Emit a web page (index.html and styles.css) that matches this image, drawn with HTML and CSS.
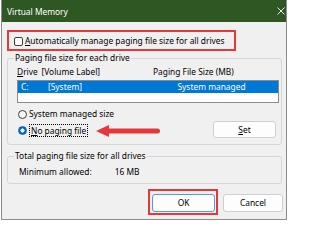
FILE: index.html
```html
<!DOCTYPE html>
<html>
<head>
<meta charset="utf-8">
<title>Virtual Memory</title>
<link rel="stylesheet" href="styles.css">
</head>
<body>
<div class="window">
  <div class="titlebar">
    <span class="title">Virtual Memory</span>
    <svg class="close" width="8" height="8" viewBox="0 0 8 8"><path d="M0.5 0.5L7.5 7.5M7.5 0.5L0.5 7.5" stroke="#e6ebe4" stroke-width="1"/></svg>
  </div>
  <div class="content">
    <div class="highlight auto">
      <span class="checkbox"></span>
      <span class="cblabel"><u>A</u>utomatically manage paging file size for all drives</span>
    </div>
    <fieldset class="group g1">
      <legend>Paging file size for each drive</legend>
      <div class="list-head"><span class="c1"><u>D</u>rive</span><span class="c2">[Volume Label]</span><span>Paging File Size (MB)</span></div>
      <div class="listbox">
        <div class="row selected"><span class="r1">C:</span><span class="r2">[System]</span><span>System managed</span></div>
      </div>
      <div class="radio-row r-sys"><span class="radio"></span><span class="rlabel">System managed size</span></div>
      <div class="radio-row r-none">
        <span class="radio on"></span>
        <span class="rlabel focus"><u>N</u>o paging file</span>
        <svg class="arrow" width="64" height="12" viewBox="0 0 64 12"><polygon points="0,6 13,0 13,12" fill="#e5383b"/><line x1="11" y1="6" x2="61.5" y2="6" stroke="#e5383b" stroke-width="5" stroke-linecap="round"/></svg>
        <button class="btn set"><u>S</u>et</button>
      </div>
    </fieldset>
    <fieldset class="group g2">
      <legend>Total paging file size for all drives</legend>
      <div class="min-row"><span class="mlabel">Minimum allowed:</span><span>16 MB</span></div>
    </fieldset>
    <div class="actions">
      <div class="highlight okwrap"><button class="btn ok">OK</button></div>
      <button class="btn cancel">Cancel</button>
    </div>
  </div>
</div>
</body>
</html>
```

FILE: styles.css
```css
* { box-sizing: border-box; }
html, body { margin: 0; padding: 0; background: #ffffff; }
body {
  font-family: "Noto Sans", "Open Sans", sans-serif;
  font-size: 8.4px;
  color: #000;
}
u { text-decoration: underline; text-underline-offset: 1px; }

.window {
  margin-left: 1px;
  width: 286px;
  height: 220px;
  background: #f0f0f0;
  border: 1px solid #8c8c8c;
  border-top: 0;
  display: flex;
  flex-direction: column;
}

.titlebar {
  height: 22px;
  flex: none;
  background: #2e5723;
  color: #fff;
  display: flex;
  align-items: center;
  justify-content: space-between;
  padding: 1px 1px 0 5px;
}
.title { line-height: 12px; }
.close { display: block; margin-top: -1px; }

.content {
  display: flex;
  flex-direction: column;
  padding: 8px 4px 0 5px;
}

.highlight { border: 2px solid #e5383b; }

.auto {
  width: 229px;
  height: 21px;
  display: flex;
  align-items: center;
  padding: 1px 0 0 5px;
}
.checkbox {
  width: 9px;
  height: 9px;
  border: 1px solid #3d3d3d;
  border-radius: 2px;
  background: #fff;
  flex: none;
}
.cblabel { margin-left: 2px; line-height: 12px; }

.group {
  margin: 1px 0 0 0;
  min-width: 0;
  border: 1px solid #d6d6d6;
  border-radius: 3px;
}
.group legend {
  padding: 0 1px;
  margin-left: -3px;
  line-height: 12px;
  height: 12px;
}
.g1 { padding: 2px 2px 6px 9px; }
.g2 { margin-top: 5px; padding: 4px 2px 5px 9px; }

.list-head { display: flex; height: 12px; line-height: 12px; }
.c1 { width: 24.5px; }
.c2 { width: 111.5px; }

.listbox {
  margin-top: 2px;
  height: 23px;
  border: 1px solid #8a8a8a;
  background: #fff;
}
.row { display: flex; height: 12px; line-height: 12px; padding-left: 3px; }
.row.selected { background: #0078d7; color: #fff; }
.r1 { width: 27px; }
.r2 { width: 129.5px; }

.radio-row { display: flex; align-items: center; }
.r-sys { margin-top: 5px; height: 12px; }
.r-none { margin-top: 1px; height: 17px; }
.radio {
  flex: none;
  width: 9px;
  height: 9px;
  margin-left: 1px;
  border-radius: 50%;
  border: 1px solid #3d3d3d;
  background: #f7f7f7;
}
.radio.on {
  border-color: #0067c0;
  background: radial-gradient(circle, #fff 0 1.8px, #0067c0 2.3px);
}
.r-none .radio { margin-top: 2px; }
.rlabel { margin-left: 2px; line-height: 12px; }
.focus {
  border: 1px dotted #000;
  padding: 0 1px;
  line-height: 11px;
  margin-top: 2px;
}
.arrow { display: block; flex: none; margin-left: 8px; margin-top: 2px; }

.btn {
  font: inherit;
  color: #000;
  background: #fdfdfd;
  border: 1px solid #cfcfcf;
  border-radius: 3px;
  padding: 0;
  line-height: 12px;
}
.set { margin-left: auto; margin-right: 3px; width: 63px; height: 17px; }

.min-row { display: flex; height: 12px; line-height: 12px; padding-left: 2px; }
.mlabel { width: 95.7px; }

.actions {
  display: flex;
  justify-content: flex-end;
  align-items: flex-start;
  margin-top: 5px;
  margin-right: -1px;
}
.okwrap { padding: 3px 1px 1px 2px; }
.ok { width: 63px; height: 18px; border-color: #4f9be0; display: block; }
.cancel { width: 60px; height: 18px; margin-left: 5px; margin-top: 5px; }
```
